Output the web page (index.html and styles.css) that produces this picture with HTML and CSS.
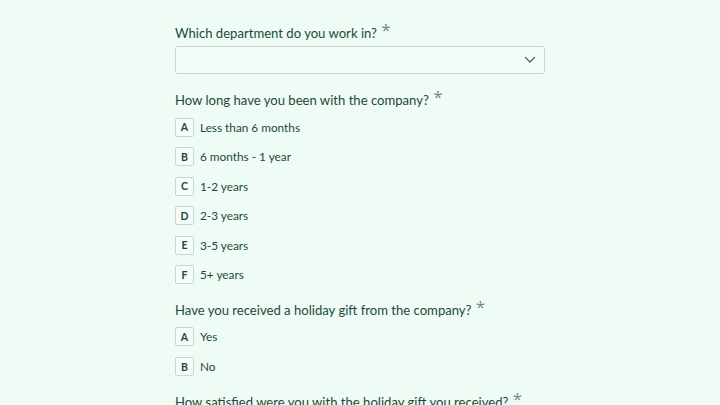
FILE: index.html
```html
<!DOCTYPE html>
<html>
<head>
<meta charset="utf-8">
<link rel="stylesheet" href="styles.css">
</head>
<body>
<main class="form">
  <section class="question">
    <h2 class="q-title">Which department do you work in? <span class="req">*</span></h2>
    <div class="select">
      <svg class="chevron" width="12" height="8" viewBox="0 0 12 8"><path d="M1.5 1.5 L6 6 L10.5 1.5" fill="none" stroke="#4a6a5d" stroke-width="1.3" stroke-linecap="round" stroke-linejoin="round"/></svg>
    </div>
  </section>
  <section class="question">
    <h2 class="q-title">How long have you been with the company? <span class="req">*</span></h2>
    <ul class="options">
      <li class="option"><span class="key">A</span><span class="label">Less than 6 months</span></li>
      <li class="option"><span class="key">B</span><span class="label">6 months - 1 year</span></li>
      <li class="option"><span class="key">C</span><span class="label">1-2 years</span></li>
      <li class="option"><span class="key">D</span><span class="label">2-3 years</span></li>
      <li class="option"><span class="key">E</span><span class="label">3-5 years</span></li>
      <li class="option"><span class="key">F</span><span class="label">5+ years</span></li>
    </ul>
  </section>
  <section class="question">
    <h2 class="q-title">Have you received a holiday gift from the company? <span class="req">*</span></h2>
    <ul class="options">
      <li class="option"><span class="key">A</span><span class="label">Yes</span></li>
      <li class="option"><span class="key">B</span><span class="label">No</span></li>
    </ul>
  </section>
  <section class="question">
    <h2 class="q-title">How satisfied were you with the holiday gift you received? <span class="req">*</span></h2>
  </section>
</main>
</body>
</html>
```
FILE: styles.css
```css
html, body {
  margin: 0;
  padding: 0;
  background: #effbf5;
  height: 100%;
  overflow: hidden;
}
body {
  font-family: Lato, "Open Sans", sans-serif;
  color: #1c4a3a;
}
.form {
  width: 370px;
  margin-left: 175px;
  padding-top: 23px;
  display: flex;
  flex-direction: column;
  gap: 16px;
}
.question {
  display: flex;
  flex-direction: column;
}
.q-title {
  margin: 0;
  font-size: 13.1px;
  font-weight: 400;
  line-height: 20px;
  height: 20px;
  white-space: nowrap;
}
.req {
  font-family: "Open Sans", sans-serif;
  font-size: 17px;
  line-height: 0;
  color: #74897f;
  position: relative;
  top: -2px;
  margin-left: 1px;
}
.select {
  margin-top: 3px;
  height: 26px;
  border: 1px solid #c9d7d0;
  border-radius: 3px;
  background: #f4fcf8;
  display: flex;
  align-items: center;
  justify-content: flex-end;
  padding-right: 8px;
}
.options {
  list-style: none;
  margin: 8px 0 0;
  padding: 0;
  display: flex;
  flex-direction: column;
  gap: 11.6px;
}
.option {
  display: flex;
  align-items: center;
  height: 18px;
  gap: 6px;
}
.key {
  box-sizing: border-box;
  width: 19px;
  height: 19px;
  border: 1px solid #c9d7d0;
  border-radius: 2px;
  background: #f6fcf9;
  font-size: 10.5px;
  font-weight: 700;
  display: flex;
  align-items: center;
  justify-content: center;
  color: #1c4a3a;
}
.label {
  font-size: 11.8px;
}
```
